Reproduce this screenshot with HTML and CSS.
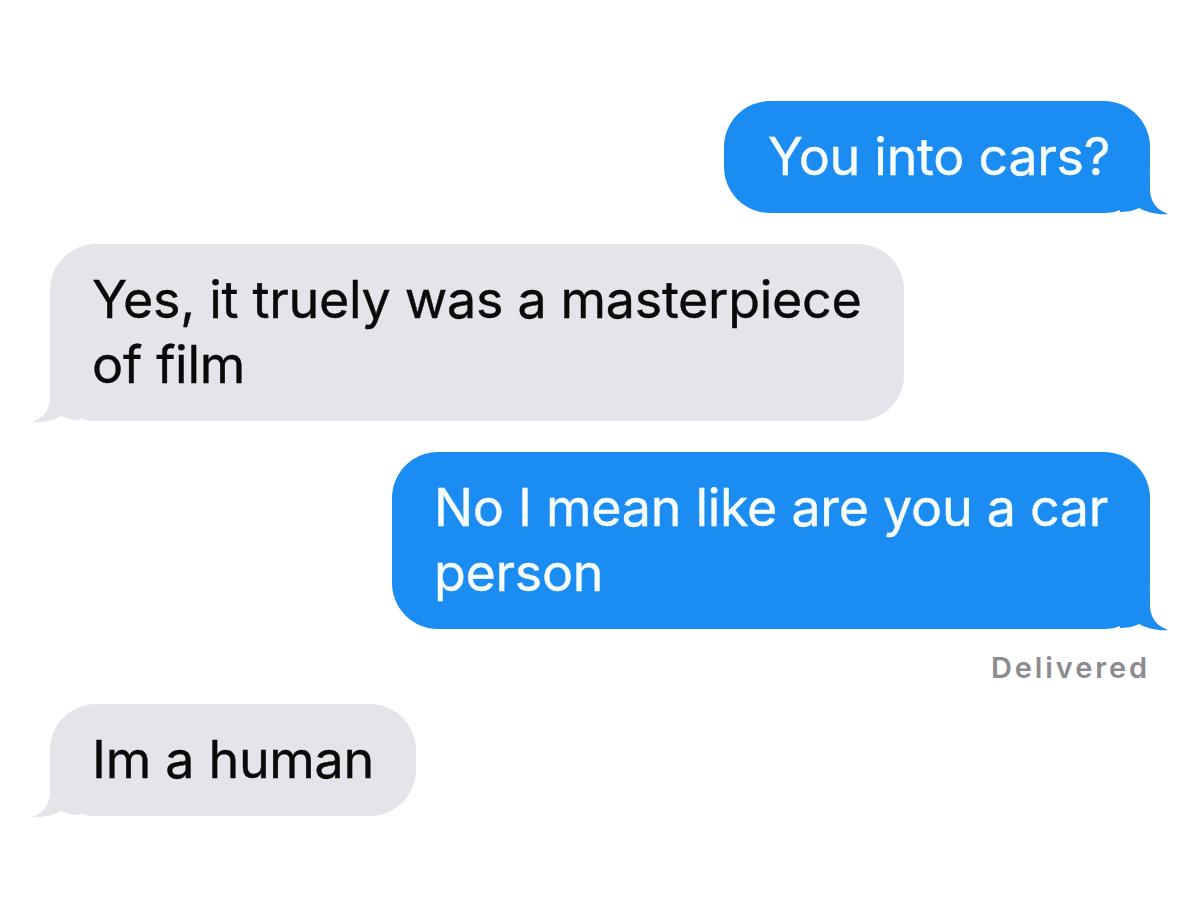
FILE: index.html
```html
<!DOCTYPE html>
<html lang="en">
<head>
<meta charset="utf-8">
<title>Messages</title>
<link rel="stylesheet" href="styles.css">
</head>
<body>
<main class="thread">
  <div class="bubble sent first">
    You into cars?
    <svg class="tail tail-right" viewBox="0 0 50 42" aria-hidden="true"><path d="M0,0 H30 V16 C30,29 37,37 48,41 C40,42 28,40 19,35 C13,38 6,39 0,39 Z"/></svg>
  </div>
  <div class="bubble received">
    Yes, it truely was a masterpiece<br>of film
    <svg class="tail tail-left" viewBox="0 0 50 42" aria-hidden="true"><path d="M0,0 H30 V16 C30,29 37,37 48,41 C40,42 28,40 19,35 C13,38 6,39 0,39 Z"/></svg>
  </div>
  <div class="bubble sent">
    No I mean like are you a car<br>person
    <svg class="tail tail-right" viewBox="0 0 50 42" aria-hidden="true"><path d="M0,0 H30 V16 C30,29 37,37 48,41 C40,42 28,40 19,35 C13,38 6,39 0,39 Z"/></svg>
  </div>
  <div class="status">Delivered</div>
  <div class="bubble received last">
    Im a human
    <svg class="tail tail-left" viewBox="0 0 50 42" aria-hidden="true"><path d="M0,0 H30 V16 C30,29 37,37 48,41 C40,42 28,40 19,35 C13,38 6,39 0,39 Z"/></svg>
  </div>
</main>
</body>
</html>
```
FILE: styles.css
```css
html, body {
  margin: 0;
  padding: 0;
  background: #ffffff;
}

body {
  font-family: Inter, "Liberation Sans", Arial, sans-serif;
  width: 1200px;
  height: 900px;
  overflow: hidden;
}

.thread {
  display: flex;
  flex-direction: column;
  padding: 101px 50px 0 50px;
}

.bubble {
  position: relative;
  width: fit-content;
  padding: 23px 42px 24px 42px;
  border-radius: 46px;
  font-size: 52px;
  font-weight: 400;
  line-height: 65px;
  letter-spacing: -0.3px;
  -webkit-text-stroke: 0.4px currentColor;
}

.sent {
  align-self: flex-end;
  background: #1b8cf2;
  color: #f6fdff;
  fill: #1b8cf2;
  margin-top: 31px;
}

.received {
  align-self: flex-start;
  background: #e6e3ea;
  color: #0a0a0a;
  fill: #e6e3ea;
  margin-top: 31px;
}

.first {
  margin-top: 0;
  padding-left: 44px;
  padding-right: 40px;
}

.tail {
  position: absolute;
  bottom: -2px;
  width: 50px;
  height: 42px;
}

.tail-right {
  right: -20px;
}

.tail-left {
  left: -20px;
  transform: scaleX(-1);
}

.status {
  align-self: flex-end;
  margin-top: 19px;
  margin-right: 0;
  font-size: 29px;
  line-height: 40px;
  font-weight: 600;
  letter-spacing: 2.9px;
  color: #8b8b90;
}

.last {
  margin-top: 16px;
}
```
